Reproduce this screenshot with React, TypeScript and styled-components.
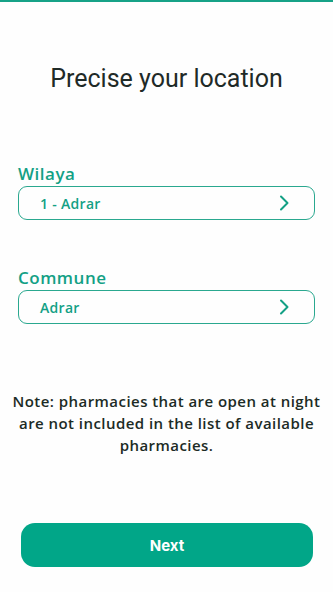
import React from "react";
import styled, { createGlobalStyle } from "styled-components";

const Global = createGlobalStyle`
  html, body { margin: 0; padding: 0; background: #fefefe; }
  body { font-family: "Open Sans", "Noto Sans", sans-serif; }
  * { box-sizing: border-box; }
`;

const Screen = styled.div`
  width: 333px;
  height: 592px;
  display: flex;
  flex-direction: column;
  border-top: 2px solid #17a287;
  background: #fefefe;
`;

const Title = styled.h1`
  margin: 62px 0 0;
  text-align: center;
  font-family: Roboto, sans-serif;
  font-weight: 400;
  font-size: 25px;
  line-height: 30px;
  color: #1f2a27;
`;

const Field = styled.div<{ $top: number }>`
  margin: ${(p) => p.$top}px 18px 0 18px;
  display: flex;
  flex-direction: column;
  gap: 2px;
`;

const Label = styled.div`
  font-family: "Open Sans", sans-serif;
  font-weight: 600;
  font-size: 17px;
  letter-spacing: 0.5px;
  line-height: 20px;
  color: #13a085;
`;

const Select = styled.div`
  height: 34px;
  border: 1.5px solid #2aa88f;
  border-radius: 9px;
  display: flex;
  align-items: center;
  justify-content: space-between;
  padding: 0 24px 0 21px;
  font-family: "Open Sans", sans-serif;
  font-weight: 600;
  font-size: 14px;
  letter-spacing: 0.3px;
  color: #13a085;
`;

const Note = styled.p`
  margin: 66px 6px 0;
  text-align: center;
  font-family: "Open Sans", sans-serif;
  font-weight: 600;
  font-size: 15px;
  letter-spacing: 0.45px;
  line-height: 22px;
  color: #1c2b25;
`;

const Spacer = styled.div`
  flex: 1;
`;

const Button = styled.button`
  margin: 0 20px 25px 21px;
  height: 44px;
  border: none;
  border-radius: 14px;
  background: #01a688;
  color: #ffffff;
  font-family: Inter, sans-serif;
  font-weight: 700;
  font-size: 15px;
`;

const Chevron = () => (
  <svg width="12" height="18" viewBox="0 0 12 18" fill="none">
    <path d="M3 2.5l6.5 6.5-6.5 6.5" stroke="#13a085" strokeWidth="2" strokeLinecap="round" strokeLinejoin="round" />
  </svg>
);

export default function App() {
  return (
    <>
      <Global />
      <Screen>
        <Title>Precise your location</Title>
        <Field $top={70}>
          <Label>Wilaya</Label>
          <Select>
            <span>1 - Adrar</span>
            <Chevron />
          </Select>
        </Field>
        <Field $top={48}>
          <Label>Commune</Label>
          <Select>
            <span>Adrar</span>
            <Chevron />
          </Select>
        </Field>
        <Note>
          Note: pharmacies that are open at night are not included in the list of available pharmacies.
        </Note>
        <Spacer />
        <Button>Next</Button>
      </Screen>
    </>
  );
}
